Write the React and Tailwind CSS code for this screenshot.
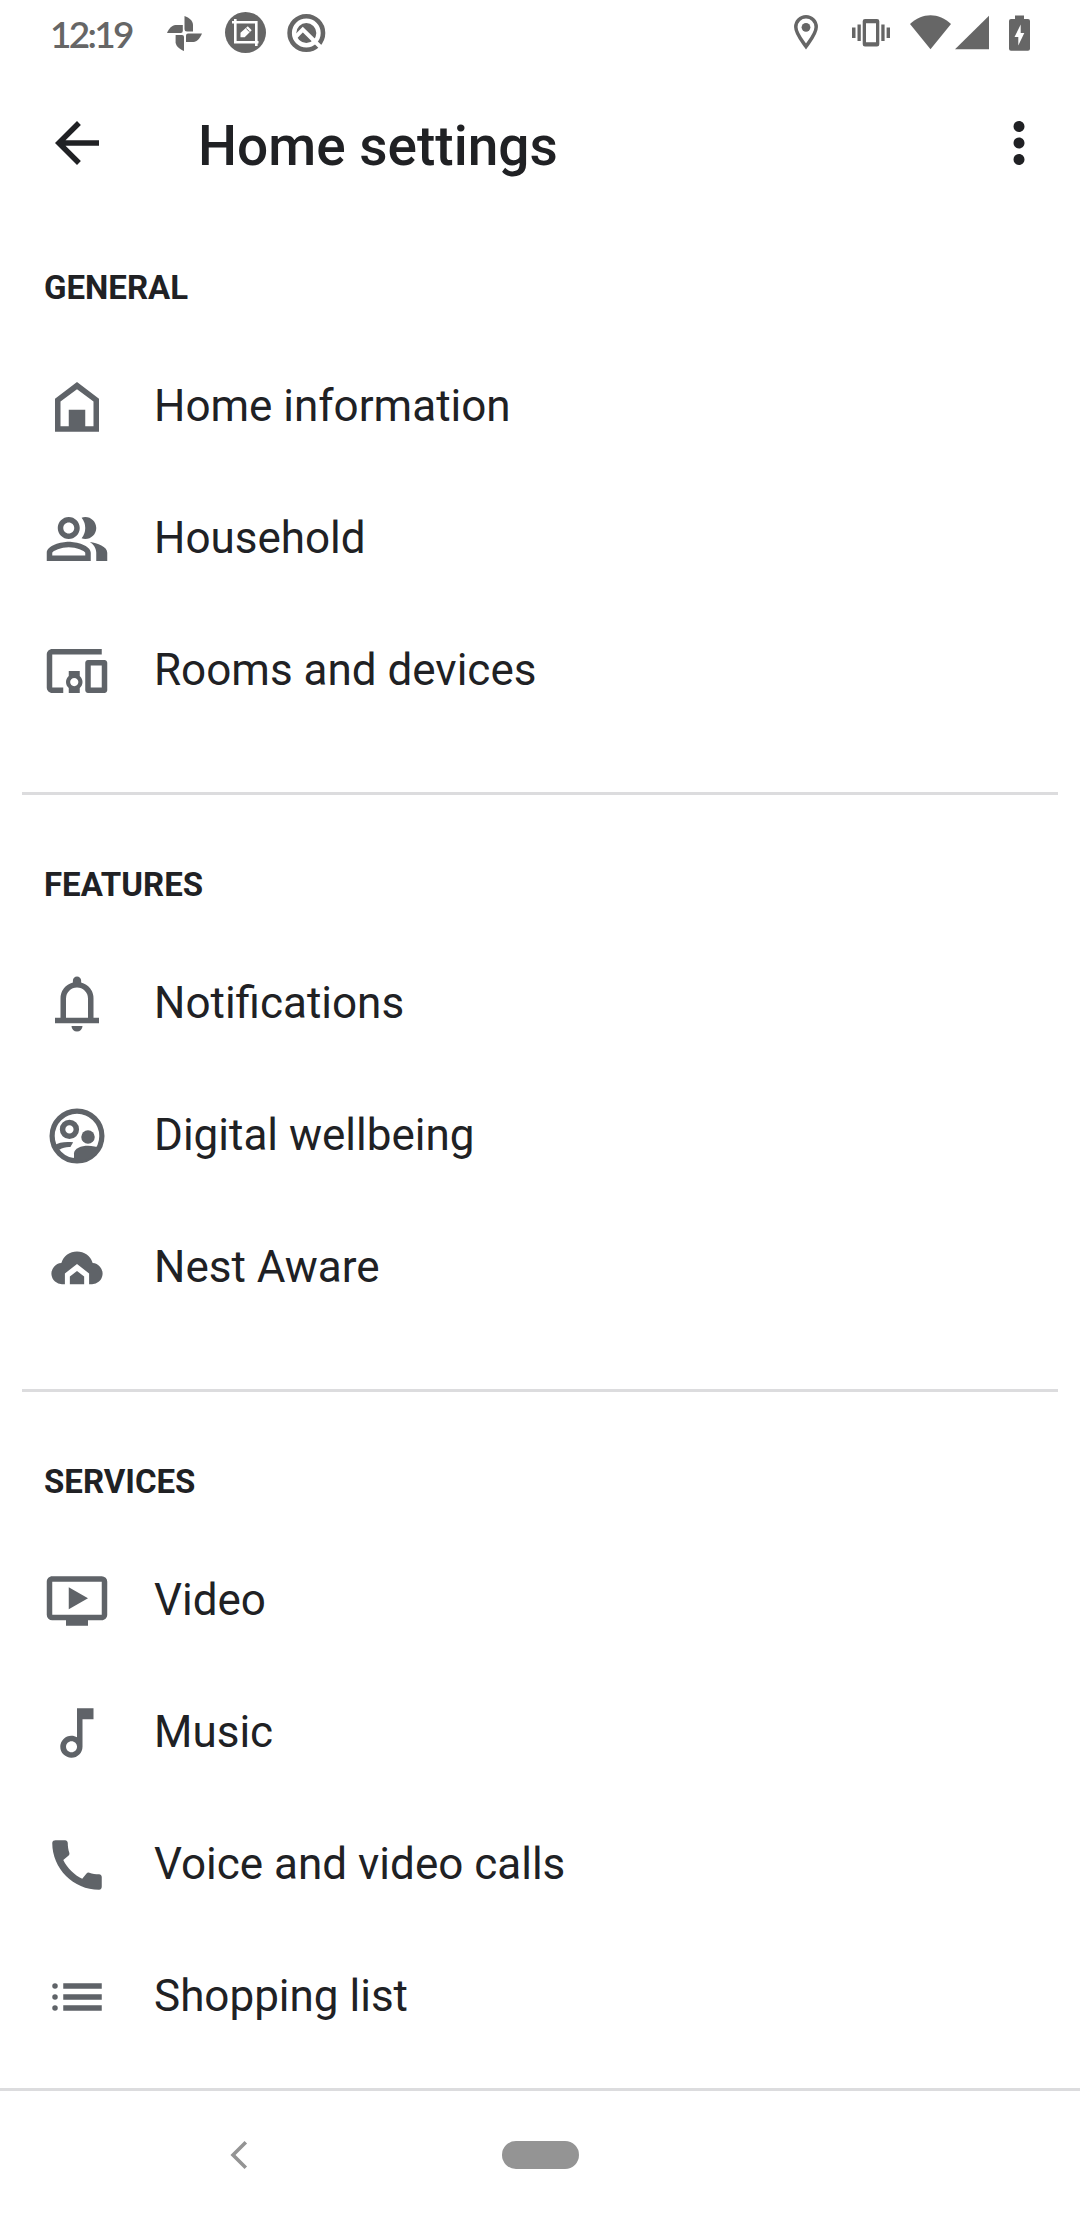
import React from "react";
import {
  MdArrowBack,
  MdMoreVert,
  MdOutlinePeopleAlt,
  MdDevicesOther,
  MdOndemandVideo,
  MdOutlineMusicNote,
  MdCall,
} from "react-icons/md";

function HomeIcon({ className }) {
  return (
    <svg viewBox="0 0 24 24" className={className} fill="currentColor">
      <path fillRule="evenodd" d="M4 21V9l8-6.1L20 9v12H4z M6 19h3v-6h6v6h3v-9l-6-4.5L6 10v9z" />
    </svg>
  );
}

function BellIcon({ className }) {
  return (
    <svg viewBox="0 0 24 24" className={className} fill="currentColor">
      <path d="M4 19v-2h2v-7q0-2.075 1.25-3.687T10.5 4.2v-.7q0-.625.438-1.062T12 2t1.063.438T13.5 3.5v.7q2 .5 3.25 2.113T18 10v7h2v2H4zm8 3q-.825 0-1.412-.587T10 20h4q0 .825-.587 1.413T12 22zm-4-5h8v-7q0-1.65-1.175-2.825T12 6 9.175 7.175 8 10v7z" />
    </svg>
  );
}

function WellbeingIcon({ className }) {
  return (
    <svg viewBox="0 0 24 24" className={className}>
      <g fill="none" stroke="currentColor">
        <circle cx="12" cy="12" r="9.05" strokeWidth="1.9" />
        <circle cx="9.25" cy="9.6" r="2.5" strokeWidth="2" />
      </g>
      <g fill="currentColor">
        <circle cx="16" cy="12.4" r="2.45" />
        <path d="M3.6 15.4C5.4 14.3 8 13.9 10.6 14.3L9.6 16C8.2 15.9 6.8 16.2 5.6 17z" />
        <path d="M10.9 21V18.4C10.9 16.4 13.6 15.5 16 15.5C17.5 15.5 19.3 15.9 20.6 16.4A9.6 9.6 0 0 1 10.9 21z" />
      </g>
    </svg>
  );
}

function NestAwareIcon({ className }) {
  return (
    <svg viewBox="0 0 24 24" className={className} fill="currentColor">
      <path d="M7.6 17.9H6.8A3.85 3.85 0 0 1 6.3 10.2A5.95 5.95 0 0 1 17.7 10.2A3.85 3.85 0 0 1 17.2 17.9H16.4V14L12 10.5L7.6 14z" />
      <path d="M9.4 17.9V15.1L12 13.1L14.6 15.1V17.9z" />
    </svg>
  );
}

function ListIcon({ className }) {
  return (
    <svg viewBox="0 0 24 24" className={className} fill="currentColor">
      <circle cx="4" cy="8" r="1" />
      <circle cx="4" cy="12" r="1" />
      <circle cx="4" cy="16" r="1" />
      <path d="M7 7h14v2H7zM7 11h14v2H7zM7 15h14v2H7z" />
    </svg>
  );
}

const sections = [
  {
    title: "GENERAL",
    items: [
      { label: "Home information", Icon: HomeIcon },
      { label: "Household", Icon: MdOutlinePeopleAlt },
      { label: "Rooms and devices", Icon: MdDevicesOther },
    ],
  },
  {
    title: "FEATURES",
    items: [
      { label: "Notifications", Icon: BellIcon },
      { label: "Digital wellbeing", Icon: WellbeingIcon },
      { label: "Nest Aware", Icon: NestAwareIcon },
    ],
  },
  {
    title: "SERVICES",
    items: [
      { label: "Video", Icon: MdOndemandVideo },
      { label: "Music", Icon: MdOutlineMusicNote },
      { label: "Voice and video calls", Icon: MdCall },
      { label: "Shopping list", Icon: ListIcon },
    ],
  },
];

function StatusBar() {
  return (
    <div className="flex h-[66px] shrink-0 items-center justify-between px-[50px] text-[#666666]">
      <div className="flex h-[66px] items-center">
        <span className="w-[117px] whitespace-nowrap pt-0.5 font-['Lato',sans-serif] text-[37px] font-semibold leading-[62px] tracking-[-2.7px]">
          12:19
        </span>
        <svg className="h-[66px] w-[35px]" viewBox="0 0 35 66" fill="currentColor">
          <path d="M17.5 16C22.5 18 25.5 20.5 26 24.5V31.5H20Q17.5 31.5 17.5 29z" />
          <path d="M35 33.5C33 38.5 30 41.5 26.5 42H19V35.5Q19 33.5 21 33.5z" />
          <path d="M17 51C12 49 9 46 8.6 42.5V35H15Q17 35 17 37z" />
          <path d="M0 33C2 28 5 25.4 8.5 25H15.8V31Q15.8 33 13.8 33z" />
        </svg>
        <svg className="ml-[23px] h-[66px] w-[41px]" viewBox="0 0 41 66">
          <circle cx="20.5" cy="32.5" r="20.5" fill="currentColor" />
          <g fill="none" stroke="#fff" strokeWidth="2.6">
            <path d="M7 22.3H31.3V46" />
            <path d="M10.3 19V42.3H33.5" />
          </g>
          <path d="M15.5 37.3V32.8L22.8 26.2L26.7 30.2L19.7 37.3z" fill="#fff" />
          <path d="M21.3 28.6L24.6 31.8" stroke="#666666" strokeWidth="1" />
        </svg>
        <svg className="ml-[21px] h-[66px] w-[40px]" viewBox="0 0 40 66" fill="none">
          <circle cx="19.3" cy="33" r="16.7" stroke="currentColor" strokeWidth="4.6" />
          <circle cx="19.3" cy="33" r="10" fill="currentColor" />
          <path d="M8.5 37L15.8 29.5L35.5 49" stroke="#fff" strokeWidth="4" />
        </svg>
      </div>

      <div className="flex h-[66px] items-center">
        <svg className="h-[66px] w-[24px]" viewBox="0 0 24 66" fill="none">
          <path d="M12 46.5C7.5 40 1.8 33.5 1.8 27A10.2 10.2 0 0 1 22.2 27C22.2 33.5 16.5 40 12 46.5z" stroke="currentColor" strokeWidth="3.5" />
          <circle cx="12" cy="27.3" r="4.4" fill="currentColor" />
        </svg>
        <svg className="ml-[34px] h-[66px] w-[38px]" viewBox="0 0 38 66" fill="currentColor">
          <path d="M0 27.5h3.5v10.5H0zM5.5 24.5h3.3v16.5H5.5zM29.3 24.5h3.3v16.5h-3.3zM34.6 27.5H38v10.5h-3.4z" />
          <path fillRule="evenodd" d="M13 19H25Q27.3 19 27.3 21.3V44.2Q27.3 46.5 25 46.5H13Q10.7 46.5 10.7 44.2V21.3Q10.7 19 13 19zM14 23.3V42.2H24V23.3z" />
        </svg>
        <svg className="ml-[20px] h-[66px] w-[41px]" viewBox="0 0 41 66" fill="currentColor">
          <path d="M20.5 49.3L0 24C12 12.3 29 12.3 41 24z" />
        </svg>
        <svg className="ml-[4px] h-[66px] w-[34px]" viewBox="0 0 34 66" fill="currentColor">
          <path d="M34 15.7V49.3H0z" />
        </svg>
        <svg className="ml-[20px] h-[66px] w-[21px]" viewBox="0 0 21 66">
          <path fill="currentColor" d="M6 15.5H15V19H19Q21 19 21 21V48.7Q21 50.7 19 50.7H2Q0 50.7 0 48.7V21Q0 19 2 19H6z" />
          <path fill="#fff" d="M11.7 24.5V33H15.3L9.3 45.5V37H5.5z" />
        </svg>
      </div>
    </div>
  );
}

function Section({ title, items }) {
  return (
    <section className="shrink-0">
      <h2 className="h-[143px] pl-[44px] pt-[57px] text-[33px] font-bold leading-[66px]">{title}</h2>
      <ul>
        {items.map(({ label, Icon }) => (
          <li key={label} className="flex h-[132px] items-center pl-[44px]">
            <Icon className="h-[66px] w-[66px] text-[#5f6368]" />
            <span className="ml-[44px] pb-0.5 text-[44px] leading-[66px]">{label}</span>
          </li>
        ))}
      </ul>
    </section>
  );
}

export default function App() {
  return (
    <div className="flex h-[2220px] w-[1080px] flex-col overflow-hidden bg-white font-['Roboto',sans-serif] text-[#202124]">
      <StatusBar />
      <header className="flex h-[132px] shrink-0 items-center pl-[44px] pr-[28px]">
        <MdArrowBack className="mt-[22px] h-[66px] w-[66px]" />
        <h1 className="ml-[88px] mt-[28px] flex-1 text-[55px] font-medium leading-[72px]">Home settings</h1>
        <MdMoreVert className="mt-[22px] h-[66px] w-[66px]" />
      </header>
      <main className="flex h-[1890px] shrink-0 flex-col overflow-hidden">
        {sections.map((section, i) => (
          <React.Fragment key={section.title}>
            {i > 0 && <hr className="mx-[22px] mt-[55px] h-[3px] shrink-0 border-0 bg-[#dcdcde]" />}
            <Section {...section} />
          </React.Fragment>
        ))}
      </main>
      <nav className="grid flex-1 grid-cols-[478px_124px_478px] items-center border-t-[3px] border-[#dcdcde]">
        <svg className="ml-[230px] mt-[-2px] h-[28px] w-[18px]" viewBox="0 0 18 28" fill="none">
          <path d="M15.8 1.3L3 14L15.8 26.7" stroke="#949494" strokeWidth="3.6" />
        </svg>
        <div className="mt-[-1px] h-[28px] w-[77px] justify-self-center rounded-full bg-[#949494]" />
      </nav>
    </div>
  );
}
